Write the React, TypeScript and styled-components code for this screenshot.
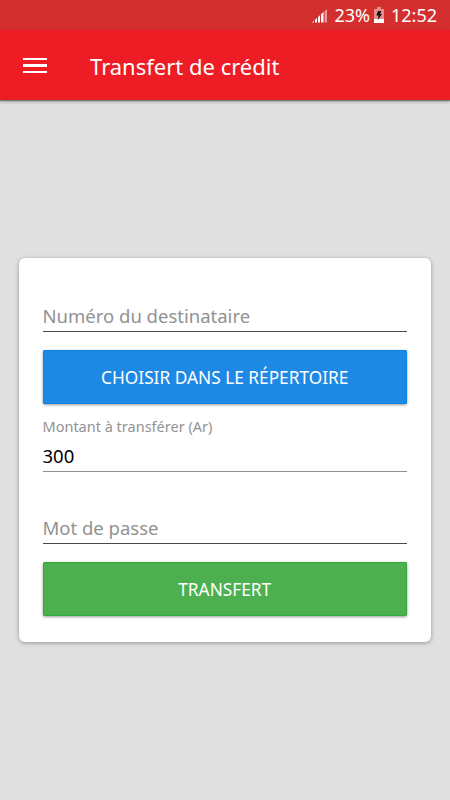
import React from 'react';
import styled, { createGlobalStyle } from 'styled-components';

const GlobalStyle = createGlobalStyle`
  * { box-sizing: border-box; }
  body { margin: 0; background: #e0e0e0; }
`;

const Screen = styled.div`
  width: 450px;
  height: 800px;
  display: flex;
  flex-direction: column;
  background: #e0e0e0;
  font-family: "Noto Sans", sans-serif;
  overflow: hidden;
`;

const StatusBar = styled.header`
  height: 30px;
  flex: none;
  display: flex;
  align-items: center;
  justify-content: flex-end;
  padding-right: 13px;
  background: #d32f2f;
  color: #fff;
`;

const Label = styled.span<{ $size: number; $spacing?: number }>`
  font-size: ${(p) => p.$size}px;
  letter-spacing: ${(p) => p.$spacing ?? 0}px;
  line-height: 24px;
  white-space: nowrap;
`;

const SignalIcon = styled.svg`
  width: 16px;
  height: 15px;
  margin: 0 6px 0 0;
`;

const BatteryIcon = styled.svg`
  width: 10px;
  height: 16px;
  margin: 0 7px 0 4px;
`;

const AppBar = styled.div`
  height: 70px;
  flex: none;
  display: flex;
  align-items: center;
  padding: 1px 23px 0;
  gap: 43px;
  background: #ee1c25;
  color: #fff;
  box-shadow: 0 1px 1px #6f8280, 0 2px 3px rgba(0, 0, 0, 0.25);
`;

const MenuButton = styled.button`
  border: 0;
  padding: 0;
  background: none;
  width: 24px;
  height: 16px;
  display: flex;
  flex-direction: column;
  justify-content: space-between;
`;

const MenuLine = styled.span`
  width: 24px;
  height: 2.4px;
  background: #fff;
`;

const Title = styled.h1`
  margin: 0;
  font-size: 22px;
  font-weight: 400;
  line-height: 30px;
  letter-spacing: 0;
  white-space: nowrap;
`;

const Card = styled.form`
  width: 412px;
  height: 383.5px;
  margin: 158px 0 0 19px;
  padding: 42px 24px 0 23.5px;
  background: #fff;
  border-radius: 6px;
  box-shadow: 0 1px 4px rgba(0, 0, 0, 0.34);
  display: flex;
  flex-direction: column;
`;

const Field = styled.div<{ $height: number; $line: string; $color: string }>`
  height: ${(p) => p.$height}px;
  flex: none;
  display: flex;
  flex-direction: column;
  justify-content: flex-end;
  padding-bottom: 3px;
  border-bottom: 1px solid ${(p) => p.$line};
  color: ${(p) => p.$color};
`;

const Caption = styled.label`
  color: #929292;
  font-size: 14.5px;
  line-height: 20px;
  margin-bottom: 8px;
  letter-spacing: 0;
  white-space: nowrap;
`;

const Action = styled.button<{ $fill: string; $edge: string; $spacing: number }>`
  height: 54px;
  flex: none;
  margin-top: 18px;
  border: 0;
  border-radius: 2px;
  padding: 1px 0 0;
  background: ${(p) => p.$fill};
  color: #fff;
  font: 400 17.3px/24px "Noto Sans", sans-serif;
  letter-spacing: ${(p) => p.$spacing}px;
  box-shadow: inset 0 0 0 1px ${(p) => p.$edge}, 0 1px 3px rgba(0, 0, 0, 0.4);
`;

export default function App() {
  return (
    <>
      <GlobalStyle />
      <Screen>
        <StatusBar>
          <SignalIcon viewBox="0 0 16 15">
            <path d="M0 14.5 2 12.7v1.8zM3 11.8l2-1.8v4.5H3zM6 9l2-1.8v7.3H6zM9 6.3l2-1.8v10H9z" fill="#fff" />
            <path d="M11 4.5l1-.9v10.9h-1zM12.6 3.2 15 1v13.5h-2.4z" fill="#ef9a9a" />
          </SignalIcon>
          <Label $size={18}>23%</Label>
          <BatteryIcon viewBox="0 0 10 16">
            <path d="M3 0h4v2h3v14H0V2h3z" fill="#e98c8c" />
            <path d="M0 12h10v4H0z" fill="#fff" />
            <path d="M4 4h3.2L6.3 7H8l-4.2 6 .8-4.4H2.3z" fill="#111" />
          </BatteryIcon>
          <Label $size={18}>12:52</Label>
        </StatusBar>
        <AppBar>
          <MenuButton type="button" aria-label="Menu">
            <MenuLine />
            <MenuLine />
            <MenuLine />
          </MenuButton>
          <Title>Transfert de crédit</Title>
        </AppBar>
        <Card>
          <Field $height={32} $line="#484848" $color="#929292">
            <Label $size={18.5}>Numéro du destinataire</Label>
          </Field>
          <Action type="button" $fill="#1e88e5" $edge="#0f82e6" $spacing={0}>
            CHOISIR DANS LE RÉPERTOIRE
          </Action>
          <Field $height={68} $line="#929292" $color="#000">
            <Caption>Montant à transférer (Ar)</Caption>
            <Label $size={18.5}>300</Label>
          </Field>
          <Field $height={72} $line="#484848" $color="#929292">
            <Label $size={18.5}>Mot de passe</Label>
          </Field>
          <Action type="button" $fill="#4caf50" $edge="#32ab38" $spacing={0}>
            TRANSFERT
          </Action>
        </Card>
      </Screen>
    </>
  );
}
